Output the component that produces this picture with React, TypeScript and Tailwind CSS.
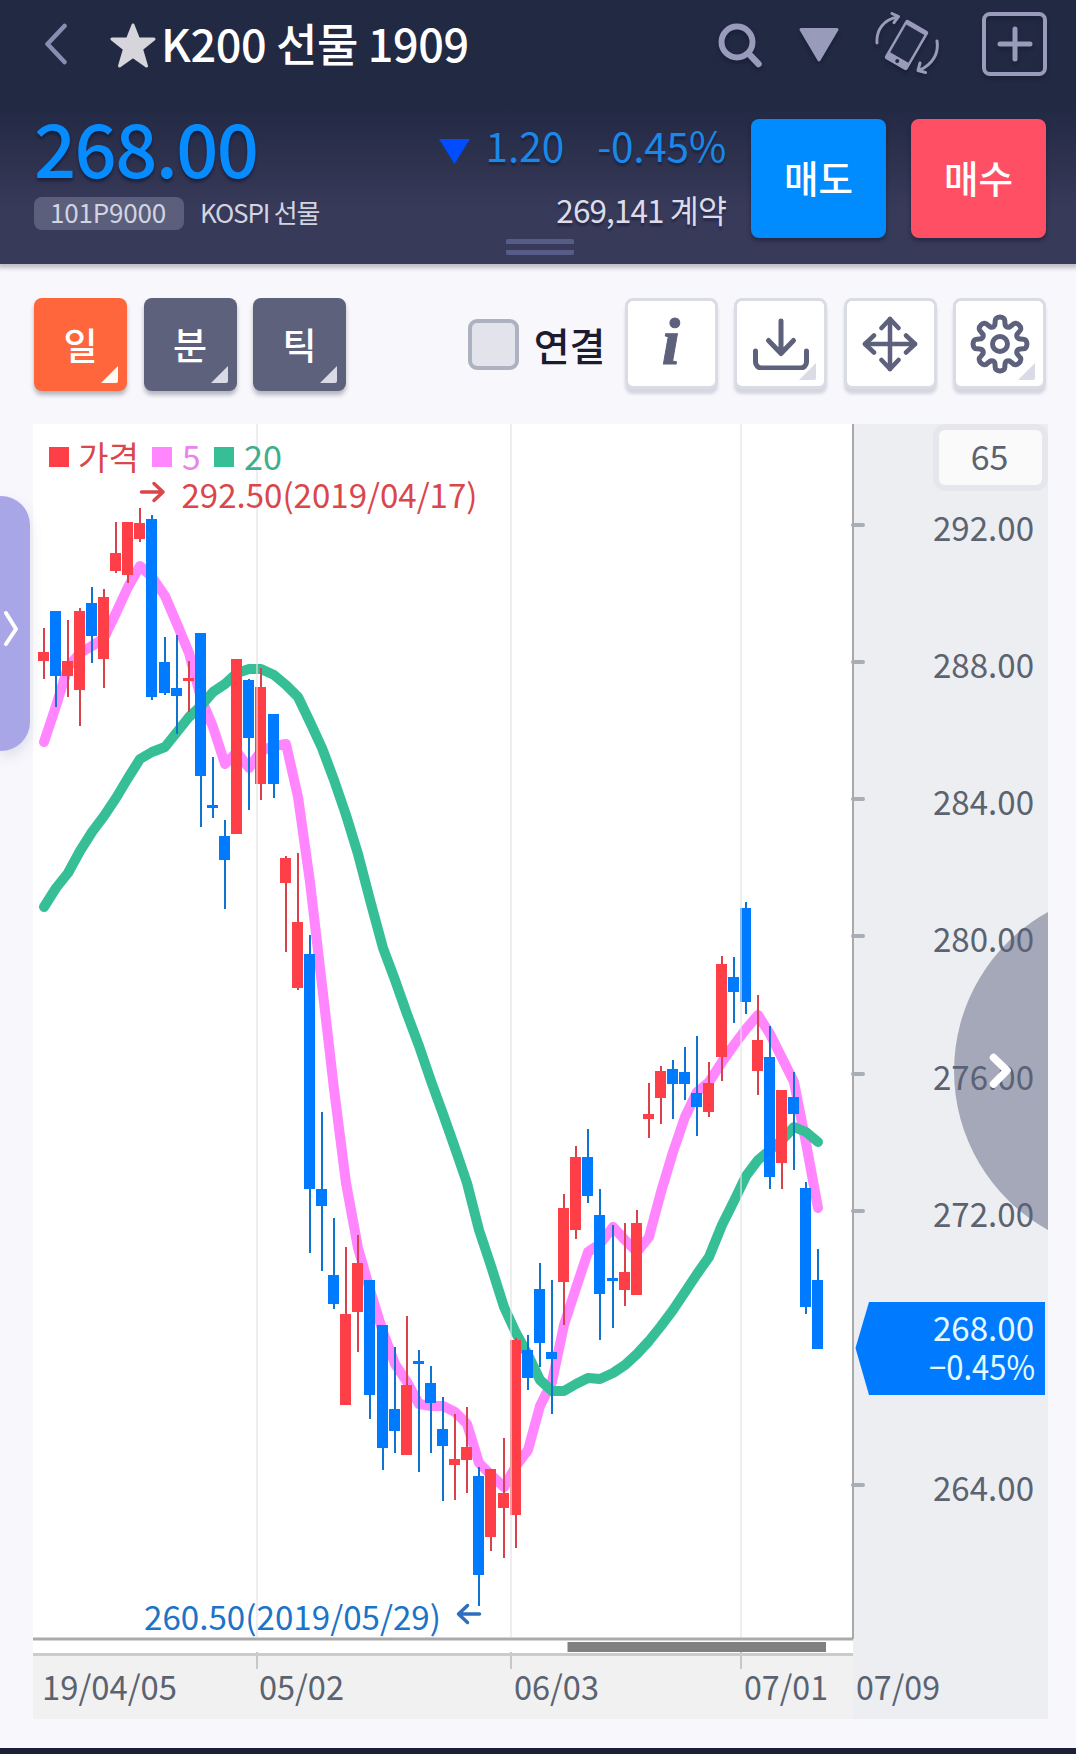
import type { ReactNode } from "react";

// ── Types ──────────────────────────────────────────────────────────────────────

// direction, high, body top, body bottom, low (chart units, y grows downwards)
type Candle = ["up" | "down", number, number, number, number];

// ── Data ───────────────────────────────────────────────────────────────────────

const CANDLES: Candle[] = [
  ["up", 628, 652, 661, 679],
  ["down", 611, 611, 676, 707],
  ["up", 620, 661, 676, 697],
  ["up", 608, 611, 690, 726],
  ["down", 587, 603, 636, 663],
  ["up", 589, 597, 659, 688],
  ["up", 522, 553, 571, 573],
  ["up", 522, 522, 575, 583],
  ["up", 508, 523, 539, 542],
  ["down", 515, 519, 697, 700],
  ["down", 637, 662, 693, 695],
  ["down", 635, 688, 696, 734],
  ["up", 661, 678, 681, 712],
  ["down", 633, 633, 776, 827],
  ["down", 757, 805, 808, 818],
  ["down", 820, 836, 860, 909],
  ["up", 659, 659, 834, 834],
  ["down", 679, 680, 738, 810],
  ["up", 668, 687, 784, 800],
  ["down", 714, 714, 784, 798],
  ["up", 856, 858, 883, 952],
  ["up", 853, 922, 988, 990],
  ["down", 935, 954, 1189, 1253],
  ["down", 1112, 1189, 1206, 1271],
  ["down", 1218, 1275, 1304, 1309],
  ["up", 1247, 1314, 1405, 1405],
  ["up", 1235, 1263, 1312, 1352],
  ["down", 1280, 1280, 1395, 1419],
  ["down", 1325, 1325, 1448, 1470],
  ["down", 1347, 1409, 1431, 1453],
  ["up", 1316, 1385, 1455, 1455],
  ["down", 1350, 1361, 1364, 1472],
  ["down", 1366, 1383, 1403, 1453],
  ["down", 1397, 1429, 1446, 1501],
  ["up", 1414, 1459, 1465, 1500],
  ["up", 1407, 1447, 1460, 1493],
  ["down", 1467, 1476, 1575, 1606],
  ["up", 1469, 1469, 1537, 1551],
  ["up", 1438, 1493, 1508, 1558],
  ["up", 1338, 1340, 1515, 1548],
  ["down", 1335, 1350, 1378, 1390],
  ["down", 1263, 1289, 1343, 1367],
  ["down", 1280, 1352, 1359, 1414],
  ["up", 1194, 1208, 1282, 1325],
  ["up", 1146, 1157, 1230, 1239],
  ["down", 1129, 1157, 1196, 1203],
  ["down", 1189, 1215, 1294, 1340],
  ["down", 1225, 1278, 1281, 1328],
  ["up", 1223, 1272, 1290, 1306],
  ["up", 1210, 1223, 1295, 1295],
  ["up", 1083, 1114, 1119, 1138],
  ["up", 1066, 1071, 1098, 1124],
  ["down", 1060, 1069, 1084, 1119],
  ["down", 1047, 1072, 1084, 1100],
  ["down", 1036, 1093, 1107, 1136],
  ["up", 1062, 1083, 1112, 1117],
  ["up", 956, 964, 1057, 1081],
  ["down", 957, 977, 992, 1023],
  ["down", 902, 908, 1002, 1014],
  ["up", 995, 1040, 1071, 1095],
  ["down", 1026, 1057, 1177, 1189],
  ["up", 1090, 1090, 1163, 1189],
  ["down", 1072, 1097, 1114, 1170],
  ["down", 1182, 1188, 1307, 1314],
  ["down", 1249, 1280, 1349, 1349],
];

const MA5 = [
  742, 706, 667, 653, 646, 638, 613, 587, 566, 577, 596, 624, 653, 698, 727, 764, 752, 768, 751,
  746, 744, 797, 882, 985, 1089, 1183, 1248, 1290, 1332, 1364, 1382, 1404, 1406, 1406, 1412, 1424,
  1463, 1475, 1487, 1466, 1450, 1406, 1382, 1325, 1288, 1252, 1244, 1227, 1240, 1252, 1237, 1192,
  1152, 1117, 1092, 1082, 1062, 1045, 1029, 1015, 1034, 1058, 1082, 1143, 1208,
];

const MA20 = [
  907, 888, 873, 851, 832, 816, 798, 778, 759, 752, 747, 732, 717, 706, 692, 684, 673, 669, 669,
  675, 685, 697, 722, 748, 780, 815, 854, 900, 948, 980, 1014, 1046, 1081, 1114, 1148, 1183, 1230,
  1266, 1307, 1333, 1355, 1380, 1391, 1391, 1384, 1378, 1379, 1373, 1365, 1354, 1341, 1326, 1310,
  1292, 1274, 1257, 1225, 1201, 1176, 1160, 1150, 1140, 1127, 1132, 1142,
];

const PRICE_TICKS: [string, number][] = [
  ["292.00", 525],
  ["288.00", 662],
  ["284.00", 799],
  ["280.00", 936],
  ["276.00", 1074],
  ["272.00", 1211],
  ["264.00", 1485],
];

const DATE_LABELS: [string, number, number][] = [
  ["19/04/05", 42, 135],
  ["05/02", 259, 85],
  ["06/03", 514, 85],
  ["07/01", 744, 84],
  ["07/09", 856, 84],
];

const GRID_X = [257, 511, 741];

const UP = "#ff3f47";
const DOWN = "#007aff";

// ── Helpers ────────────────────────────────────────────────────────────────────

// 12px per day, with one spare pixel roughly every nine days
const candleX = (i: number) => 38 + i * 12 + Math.trunc((i - 0.3) / 9.2);

const toPoints = (values: number[]) => values.map((y, i) => `${candleX(i) + 6},${y}`).join(" ");

// ── Header ─────────────────────────────────────────────────────────────────────

function RotateIcon() {
  return (
    <svg viewBox="0 0 64 62" className="h-[62px] w-16" fill="none" stroke="#989bb9">
      <g strokeWidth="3" strokeLinecap="round" strokeLinejoin="round">
        <path d="M2 31C1 18 9 7 23 5M17 1.5l6.500 3.200-4.500 6" />
        <path d="M62 29c2 13-5 24-18 29.500M45 51l-2 7.500 7.500 2" />
      </g>
      <g transform="translate(31.500 33) rotate(30)">
        <rect x="-13" y="-22.500" width="26" height="45" rx="2.500" fill="#989bb9" stroke="none" />
        <rect x="-10.500" y="-17.500" width="21" height="32" fill="#232a45" stroke="none" />
        <circle cx="0" cy="18.500" r="2" fill="#232a45" stroke="none" />
      </g>
    </svg>
  );
}

function TitleBar() {
  return (
    <div className="flex h-22 items-center pl-[44px] pr-[29px]">
      <svg viewBox="0 0 24 42" className="h-[42px] w-6" fill="none" stroke="#888eb2" strokeWidth="4.500" strokeLinecap="round" strokeLinejoin="round">
        <path d="M20.500 3L3.500 21L20.500 39" />
      </svg>
      <svg viewBox="0 0 46 45" className="ml-[42px] mt-[2px] h-[45px] w-[46px]" fill="#d6d5dc" stroke="#d6d5dc" strokeWidth="3" strokeLinejoin="round">
        <path d="M23 2L28.500 16H44L31.500 26L36.500 43L23 33.500L9.500 43L14.500 26L2 16H17.500Z" />
      </svg>
      <h1 className="ml-[5px] pb-1 text-[45px] font-medium leading-none tracking-[-0.4px] text-white">K200 선물 1909</h1>

      <div className="ml-auto flex items-center drop-shadow-[0_3px_2px_rgba(10,14,30,0.4)]">
        <svg viewBox="0 0 46 46" className="mt-[2px] h-[46px] w-[46px]" fill="none" stroke="#989bb9" strokeLinecap="round">
          <circle cx="20" cy="20" r="15.500" strokeWidth="6" />
          <path d="M32 32L41.500 42" strokeWidth="6.500" />
        </svg>
        <svg viewBox="0 0 42 36" className="ml-[35px] mt-[2px] h-9 w-[42px]" fill="#989bb9" stroke="#989bb9" strokeWidth="3" strokeLinejoin="round">
          <path d="M3 2.500H39L21 33Z" />
        </svg>
        <div className="-mt-[2px] ml-[35px]">
          <RotateIcon />
        </div>
        <div className="ml-[43px] flex h-16 w-[65px] items-center justify-center rounded-lg border-4 border-[#989bb9]">
          <svg viewBox="0 0 36 36" className="size-9" stroke="#989bb9" strokeWidth="5" strokeLinecap="round">
            <path d="M18 3V33M3 18H33" />
          </svg>
        </div>
      </div>
    </div>
  );
}

function OrderButton({ children, className }: { children: ReactNode; className: string }) {
  return (
    <button
      type="button"
      className={`flex h-[119px] w-[135px] items-center justify-center rounded-lg pb-[3px] text-[37.500px] font-medium leading-none text-white shadow-[0_3px_4px_rgba(20,22,50,0.5)] ${className}`}
    >
      {children}
    </button>
  );
}

function Quote() {
  return (
    <div className="flex items-start pl-[34px] pr-[30px]">
      <div className="pt-[21px]">
        <p className="text-[74px] font-medium leading-none tracking-[-1.600px] text-[#068cff] [text-shadow:0_3px_3px_rgba(10,14,40,0.5)]">
          268.00
        </p>
        <div className="mt-[14px] flex items-center text-[26px] leading-none text-[#d3d4e2]">
          <span className="flex h-[33px] w-[150px] items-center justify-center rounded-lg bg-[#5b5f7b] pb-[3px] pr-[2px] tracking-[-0.2px]">
            101P9000
          </span>
          <span className="ml-[16px] pb-[3px] tracking-[-1.200px]">KOSPI 선물</span>
        </div>
      </div>

      <div className="ml-auto pt-[37px]">
        <div className="flex items-center justify-end text-[40.500px] leading-none text-[#1b87e6] [text-shadow:0_3px_2px_rgba(10,14,40,0.4)]">
          <svg viewBox="0 0 31 25" className="mt-3 h-[25px] w-[31px]" fill="#004cff">
            <path d="M0 0H31L15.500 25Z" />
          </svg>
          <span className="ml-[15px]">1.20</span>
          <span className="ml-[33px] tracking-[-0.2px]">-0.45%</span>
        </div>
        <p className="mt-[28px] text-right text-[31.500px] leading-none tracking-[-0.9px] text-[#dcdce8] [text-shadow:0_3px_2px_rgba(10,14,40,0.4)]">
          269,141 계약
        </p>
      </div>

      <div className="ml-[25px] flex gap-[25px] pt-[31px]">
        <OrderButton className="bg-[#008bff]">매도</OrderButton>
        <OrderButton className="bg-[#ff4f64]">매수</OrderButton>
      </div>
    </div>
  );
}

// ── Toolbar ────────────────────────────────────────────────────────────────────

function Corner({ className }: { className: string }) {
  return (
    <svg viewBox="0 0 17 17" className={`absolute size-[17px] ${className}`} fill="currentColor">
      <path d="M17 0V15a2 2 0 0 1-2 2H0Z" />
    </svg>
  );
}

function PeriodButton({ label, active = false }: { label: string; active?: boolean }) {
  return (
    <button
      type="button"
      className={`relative flex h-[93px] w-[93px] items-center justify-center rounded-lg pb-px text-[37px] font-medium leading-none text-white shadow-[0_4px_4px_rgba(60,60,80,0.35)] ${
        active ? "bg-[#ff663c]" : "bg-[#5d617b]"
      }`}
    >
      {label}
      <Corner className={`bottom-2 right-[9px] ${active ? "text-[#fff9f2]" : "text-[#d8dae6]"}`} />
    </button>
  );
}

function ToolButton({ children, menu = false }: { children: ReactNode; menu?: boolean }) {
  return (
    <button
      type="button"
      className="relative flex h-[91px] w-[93px] items-center justify-center rounded-lg border-[3px] border-[#d9dbe5] bg-white text-[#5d617b] shadow-[0_5px_3px_rgba(150,152,170,0.35)]"
    >
      {children}
      {menu && <Corner className="bottom-[6px] right-2 text-[#d9dbe5]" />}
    </button>
  );
}

function gearPath() {
  const pts: string[] = [];
  for (let i = 0; i < 8; i++) {
    const a = (i * Math.PI) / 4 - Math.PI / 2;
    const at = (r: number, d: number) =>
      `${(30 + r * Math.cos(a + d)).toFixed(2)} ${(30 + r * Math.sin(a + d)).toFixed(2)}`;
    pts.push(`${i === 0 ? "M" : "L"}${at(19.5, -0.27)}`);
    pts.push(`L${at(23, -0.21)}`);
    pts.push(`C${at(29, -0.2)} ${at(29, 0.2)} ${at(23, 0.21)}`);
    pts.push(`L${at(19.5, 0.27)}`);
    pts.push(`Q${at(17.5, 0.3927)} ${at(19.5, 0.515)}`);
  }
  return `${pts.join("")}Z`;
}

function Toolbar() {
  return (
    <div className="flex h-[94px] items-start pl-[34px] pr-[30px]">
      <div className="flex gap-[16.500px]">
        <PeriodButton label="일" active />
        <PeriodButton label="분" />
        <PeriodButton label="틱" />
      </div>

      <label className="ml-auto flex h-[93px] items-center">
        <span className="size-[51px] rounded-[9px] border-4 border-[#aeb2c0] bg-[#e2e3eb]" />
        <span className="ml-[15px] text-[39px] font-medium leading-none text-[#1d1b30]">연결</span>
      </label>

      <div className="ml-[19px] flex gap-[16.500px]">
        <ToolButton>
          <span className="pb-1 font-['Liberation_Serif',serif] text-[66px] font-bold italic leading-none [-webkit-text-stroke:1px_#5d617b]">
            i
          </span>
        </ToolButton>
        <ToolButton menu>
          <svg viewBox="0 0 56 52" className="mt-px h-[52px] w-14" fill="none" stroke="currentColor" strokeWidth="5" strokeLinecap="round" strokeLinejoin="round">
            <path d="M28 3V35M15.500 22.500L28 35.500L40.500 22.500" />
            <path d="M2.500 33V44a6 6 0 0 0 6 6H47.500a6 6 0 0 0 6-6V33" />
          </svg>
        </ToolButton>
        <ToolButton>
          <svg viewBox="0 0 56 56" className="mt-px size-14" fill="none" stroke="currentColor" strokeWidth="4.500" strokeLinecap="round" strokeLinejoin="round">
            <path d="M28 3V53M3 28H53" />
            <path d="M19.500 12L28 3L36.500 12M19.500 44L28 53L36.500 44M12 19.500L3 28L12 36.500M44 19.500L53 28L44 36.500" />
          </svg>
        </ToolButton>
        <ToolButton menu>
          <svg viewBox="0 0 60 60" className="size-[60px]" fill="none" stroke="currentColor" strokeWidth="5" strokeLinejoin="round">
            <path d={gearPath()} />
            <circle cx="30" cy="30" r="7.500" />
          </svg>
        </ToolButton>
      </div>
    </div>
  );
}

// ── Chart ──────────────────────────────────────────────────────────────────────

function ChartLegend() {
  return (
    <g fontSize="33.500">
      <rect x="49" y="447" width="20" height="20" fill={UP} />
      <text x="78" y="470" textLength="61" lengthAdjust="spacingAndGlyphs" fill="#d9474c">가격</text>
      <rect x="152" y="447" width="20" height="20" fill="#ff86ff" />
      <text x="182" y="470" fill="#ea84ea">5</text>
      <rect x="214" y="447" width="20" height="20" fill="#36bf96" />
      <text x="244" y="470" textLength="38" lengthAdjust="spacingAndGlyphs" fill="#3fae8c">20</text>
    </g>
  );
}

function PriceChart() {
  return (
    <svg
      viewBox="33 424 1015 1295"
      className="h-[1295px] w-[1015px]"
      fontFamily="'Noto Sans CJK KR', sans-serif"
    >
      {/* Panels */}
      <rect x="33" y="424" width="820" height="1230" fill="#ffffff" />
      <rect x="33" y="1655" width="820" height="64" fill="#f1f1f1" />
      <rect x="853" y="424" width="195" height="1295" fill="#edeef2" />

      {/* Moving averages */}
      <g fill="none" strokeWidth="10" strokeLinecap="round" strokeLinejoin="round">
        <polyline points={toPoints(MA5)} stroke="#ff86ff" />
        <polyline points={toPoints(MA20)} stroke="#36bf96" />
      </g>

      {/* Candles */}
      {CANDLES.map(([dir, high, top, bottom, low], i) => (
        <g key={i}>
          <rect x={candleX(i) + 5} y={high} width="2" height={low - high} fill={dir === "up" ? "#d8434b" : "#0f74cf"} />
          <rect x={candleX(i)} y={top} width="11" height={bottom - top} fill={dir === "up" ? UP : DOWN} />
        </g>
      ))}

      {/* Month lines */}
      {GRID_X.map((x) => (
        <g key={x}>
          <rect x={x - 1} y="424" width="2" height="1213" fill="#e2e2e2" fillOpacity="0.6" />
          <rect x={x - 1} y="1652" width="2" height="17" fill="#c6c7cb" />
        </g>
      ))}

      {/* High and low markers */}
      <g fill="none" strokeWidth="3.500" strokeLinecap="round" strokeLinejoin="round">
        <path d="M141.500 492H163M154 483.500L163 492L154 500.500" stroke="#d9474c" />
        <path d="M479.500 1614H458.500M467.500 1605.500L458.500 1614L467.500 1622.500" stroke="#2e6fbd" />
      </g>
      <g fontSize="33">
        <text x="181.500" y="508" textLength="296" lengthAdjust="spacingAndGlyphs" fill="#d9474c">292.50(2019/04/17)</text>
        <text x="144" y="1630" textLength="297" lengthAdjust="spacingAndGlyphs" fill="#1c74c8">260.50(2019/05/29)</text>
      </g>

      <ChartLegend />

      {/* Axes and scrollbar */}
      <rect x="852" y="424" width="2" height="1215" fill="#a9a9ab" />
      <rect x="33" y="1637.500" width="820" height="3" fill="#aaaaaa" />
      <rect x="33" y="1653" width="820" height="3" fill="#cbcbcb" />
      <rect x="567.500" y="1642" width="258.500" height="10" fill="#808080" />

      <g fontSize="33.500" fill="#5b6370">
        {PRICE_TICKS.map(([label, y]) => (
          <g key={label}>
            <rect x="851" y={y - 2} width="14" height="4" rx="2" fill="#a9adb5" />
            <text x="933" y={y + 16} textLength="101" lengthAdjust="spacingAndGlyphs">{label}</text>
          </g>
        ))}
        {DATE_LABELS.map(([label, x, width]) => (
          <text key={label} x={x} y="1700" textLength={width} lengthAdjust="spacingAndGlyphs">{label}</text>
        ))}
      </g>

      {/* Last price */}
      <path d="M855.500 1348L869 1302H1045V1395H869Z" fill={DOWN} />
      <g fontSize="33.500" fill="#e4faff">
        <text x="933" y="1341" textLength="101" lengthAdjust="spacingAndGlyphs">268.00</text>
        <text x="929" y="1380" textLength="106" lengthAdjust="spacingAndGlyphs">−0.45%</text>
      </g>

      {/* Side panel opener */}
      <path d="M1048 912A181.500 181.500 0 0 0 1048 1230Z" fill="#5b617e" fillOpacity="0.5" />
      <path d="M993.500 1057.500L1007 1070.500L993.500 1084" fill="none" stroke="#ffffff" strokeWidth="7.500" strokeLinecap="round" strokeLinejoin="round" />
    </svg>
  );
}

// ── Page ───────────────────────────────────────────────────────────────────────

export default function App() {
  return (
    <div className="relative flex h-[1754px] w-[1076px] flex-col overflow-hidden bg-[#f7f7fc] font-['Noto_Sans_CJK_KR',sans-serif]">
      <header className="relative h-[264px] shrink-0 bg-linear-to-b from-[#222943] from-40% to-[#383a59] to-80% shadow-[0_2px_4px_2px_rgba(60,60,70,0.3)]">
        <TitleBar />
        <Quote />
        <div className="absolute left-[506px] top-[239px] h-4 w-[68px] rounded-xs border-y-[5.500px] border-[#565c86]" />
      </header>

      <main className="flex flex-1 flex-col pt-[34px]">
        <Toolbar />
        <div className="relative ml-[33px] mt-8 h-[1295px] w-[1015px]">
          <PriceChart />
          <div className="absolute right-0 top-0 flex h-[67px] w-[115px] items-center justify-center rounded-xl border-[6px] border-[#e6e7ec] bg-[#fafafa] pb-1 pr-[2px] text-[34px] leading-none text-[#5b6370]">
            65
          </div>
        </div>
      </main>

      <footer className="h-[6px] shrink-0 bg-[#1a2038]" />

      <div className="absolute left-0 top-[496px] flex h-[255px] w-[30px] items-center rounded-r-[29px] bg-[#a8a6e6] pl-[3px] pt-[9px] shadow-[0_6px_14px_rgba(80,80,120,0.15)]">
        <svg viewBox="0 0 16 36" className="h-9 w-4" fill="none" stroke="#ffffff" strokeWidth="4" strokeLinecap="round" strokeLinejoin="round">
          <path d="M3 3L13 19L3 34" />
        </svg>
      </div>
    </div>
  );
}
